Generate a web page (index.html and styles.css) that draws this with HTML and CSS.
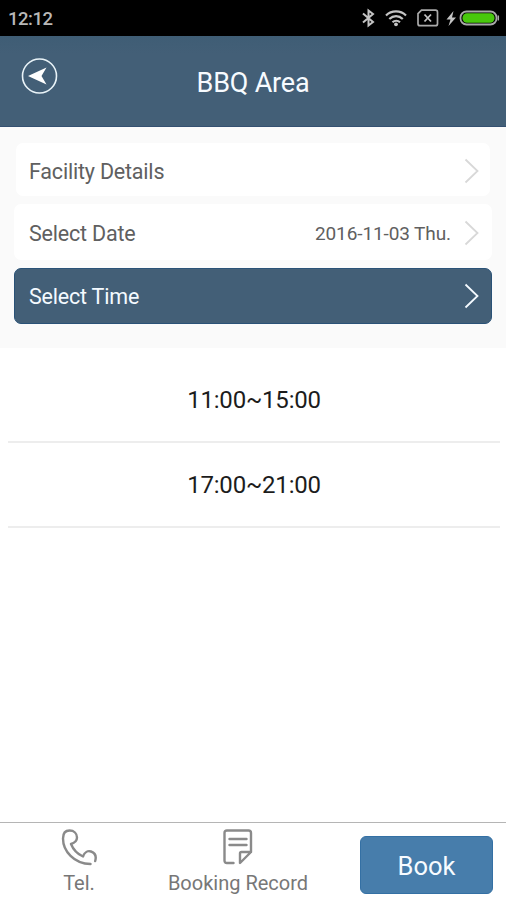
FILE: index.html
```html
<!DOCTYPE html>
<html lang="en">

<head>
    <meta charset="UTF-8">
    <meta name="viewport" content="width=device-width, initial-scale=1.0">
    <title>BBQ Area</title>
    <link rel="stylesheet" href="styles.css">
</head>

<body>

    <div class="status-bar">
        <span class="clock">12:12</span>
        <svg class="status-icons" width="140" height="24" viewBox="0 0 140 24" fill="none" stroke="#c4c4c4">
            <!-- Bluetooth -->
            <path d="M3 7.500l10 8.500-4.500 3.500V4.500L13 8 3 16.500" stroke-width="2" />
            <!-- Wifi -->
            <path d="M26 9.500c5.500-5.400 14.500-5.400 20 0M29.300 13c4-3.800 9.500-3.800 13.500 0M32.500 16.300c2.200-2 5.300-2 7.500 0" stroke-width="2.200" />
            <circle cx="36" cy="18.300" r="1.900" fill="#c4c4c4" stroke="none" />
            <!-- Sim card -->
            <path d="M61.500 4.200H75.500q2 0 2 2v11.500q0 2-2 2h-15.500q-2 0-2-2V7.700z" stroke-width="1.700" stroke="#aaa" />
            <path d="M64.500 8.500l6.500 7M71 8.500l-6.500 7" stroke-width="1.800" />
            <!-- Battery -->
            <path d="M93.500 5l-7 8.500h4l-2 6.500 7.500-8.500h-4z" fill="#c4c4c4" stroke="none" />
            <rect x="100.500" y="5.500" width="36" height="13" rx="6" stroke="#a8a8a8" stroke-width="1.800" />
            <rect x="102.500" y="7.300" width="32" height="9.400" rx="4.500" fill="#48c80c" stroke="none" />
            <path d="M138.300 9.500v5" stroke="#a8a8a8" stroke-width="1.500" />
        </svg>
    </div>

    <div class="header">
        <svg class="back" width="38" height="38" viewBox="0 0 38 38">
            <circle cx="19.500" cy="19" r="17" fill="none" stroke="#e9f3f8" stroke-width="1.600" />
            <path d="M8 19l18.500-8.500L21.500 19l5 8.500z" fill="#fff" />
        </svg>
        <h1 class="title">BBQ Area</h1>
    </div>

    <div class="options">
        <div class="option details">
            <span class="label">Facility Details</span>
            <svg class="arrow" width="16" height="26" viewBox="0 0 16 26"><path d="M1.500 1.500L13.500 13 1.500 24.500" /></svg>
        </div>
        <div class="option">
            <span class="label">Select Date</span>
            <span class="value">2016-11-03 Thu.</span>
            <svg class="arrow" width="16" height="26" viewBox="0 0 16 26"><path d="M1.500 1.500L13.500 13 1.500 24.500" /></svg>
        </div>
        <div class="option selected">
            <span class="label">Select Time</span>
            <svg class="arrow" width="16" height="26" viewBox="0 0 16 26"><path d="M1.500 1.500L13.500 13 1.500 24.500" /></svg>
        </div>
    </div>

    <div class="times">
        <div class="time"><span>11:00~15:00</span></div>
        <div class="time"><span>17:00~21:00</span></div>
    </div>

    <div class="footer">
        <div class="tab tel">
            <svg class="tab-icon" width="38" height="38" viewBox="0 0 38 38">
                <path d="M30.500 36C14 36 3 23 3 10.500 3 5 5.500 2.500 9.500 2.500c4.500 0 7.500 3 7.500 7 0 3.500-3 5.500-6 6.500 2 5 6.500 10 12 12.500 1.500-4.500 5-6 8-5 4 1.400 5.500 5 4.200 9.500" />
            </svg>
            <span class="tab-label">Tel.</span>
        </div>
        <div class="tab record">
            <svg class="tab-icon" width="30" height="38" viewBox="0 0 30 38">
                <path d="M10.500 35H4q-2.500 0-2.500-2.500V5q0-2.500 2.500-2.500h21.500q2.500 0 2.500 2.500v19L17 35v-9.500q0-1.500 1.500-1.500H28M6.500 11h17M6.500 17h17" />
            </svg>
            <span class="tab-label">Booking Record</span>
        </div>
        <button class="book">Book</button>
    </div>

</body>

</html>
```
FILE: styles.css
```css
* {
    box-sizing: border-box;
}

body {
    display: flex;
    flex-direction: column;
    height: 100vh;
    margin: 0;
    background: #fff;
    font-family: Roboto, 'Liberation Sans', sans-serif;
}

/* Status bar */
.status-bar {
    display: flex;
    justify-content: space-between;
    align-items: center;
    height: 36px;
    padding: 0 6px 0 8px;
    background: #000;
}

.clock {
    padding-top: 2px;
    color: #b8b8b8;
    font-size: 18.5px;
    font-weight: 500;
    letter-spacing: -0.5px;
}

/* Header */
.header {
    display: grid;
    grid-template-columns: 38px 1fr 38px;
    height: 91px;
    padding: 21px 20px 0;
    background: linear-gradient(#3f5d75, #435f77 20%, #435f77);
    border-bottom: 1px solid #345071;
}

.title {
    margin: 10px 0 0;
    color: #f7fbff;
    font-size: 27px;
    font-weight: 400;
    letter-spacing: -0.2px;
    line-height: 32px;
    text-align: center;
}

/* Options */
.options {
    display: flex;
    flex-direction: column;
    gap: 8px;
    height: 221px;
    padding: 16px 14px 0;
    background: #fafafa;
}

.option {
    display: flex;
    align-items: center;
    height: 56px;
    padding: 2px 12px 0 15px;
    background: #fff;
    border-radius: 7px;
    color: #606060;
}

.details {
    height: 53px;
    margin: 0 2px;
    padding: 2px 10px 0 13px;
}

.label {
    flex: 1;
    padding-top: 1px;
    font-size: 21.5px;
    letter-spacing: -0.2px;
}

.value {
    margin-right: 13px;
    padding-top: 1px;
    font-size: 19px;
    letter-spacing: -0.1px;
}

.arrow path {
    fill: none;
    stroke: #d8d8d8;
    stroke-width: 1.8;
}

.selected {
    background: #435f77;
    border: 1px solid #2a5277;
    padding: 0 11px 0 14px;
    color: #f4faff;
}

.selected .arrow path {
    stroke: #f4faff;
}

/* Time slots */
.times {
    flex: 1;
    padding: 10px 6px 0 8px;
}

.time {
    display: flex;
    justify-content: center;
    align-items: center;
    height: 85px;
    padding-top: 1px;
    border-bottom: 2px solid #ededed;
    color: #1c1c1c;
    font-size: 24px;
    letter-spacing: -0.2px;
}

/* Footer */
.footer {
    display: flex;
    height: 78px;
    border-top: 1px solid #b5b5b5;
}

.tab {
    display: flex;
    flex-direction: column;
    align-items: center;
    padding-top: 5px;
}

.tel {
    width: 158px;
}

.record {
    width: 160px;
}

.tab-icon path {
    fill: none;
    stroke: #8a8a8a;
    stroke-width: 2.4;
    stroke-linecap: round;
    stroke-linejoin: round;
}

.tab-label {
    margin-top: 5px;
    color: #777;
    font-size: 20px;
    line-height: 24px;
}

.book {
    width: 133px;
    height: 58px;
    margin: 13px 13px 0 auto;
    padding-top: 3px;
    background: #477dab;
    border: 1px solid #3470a4;
    border-radius: 6px;
    color: #f7fbff;
    font-family: inherit;
    font-size: 25.5px;
}
```
